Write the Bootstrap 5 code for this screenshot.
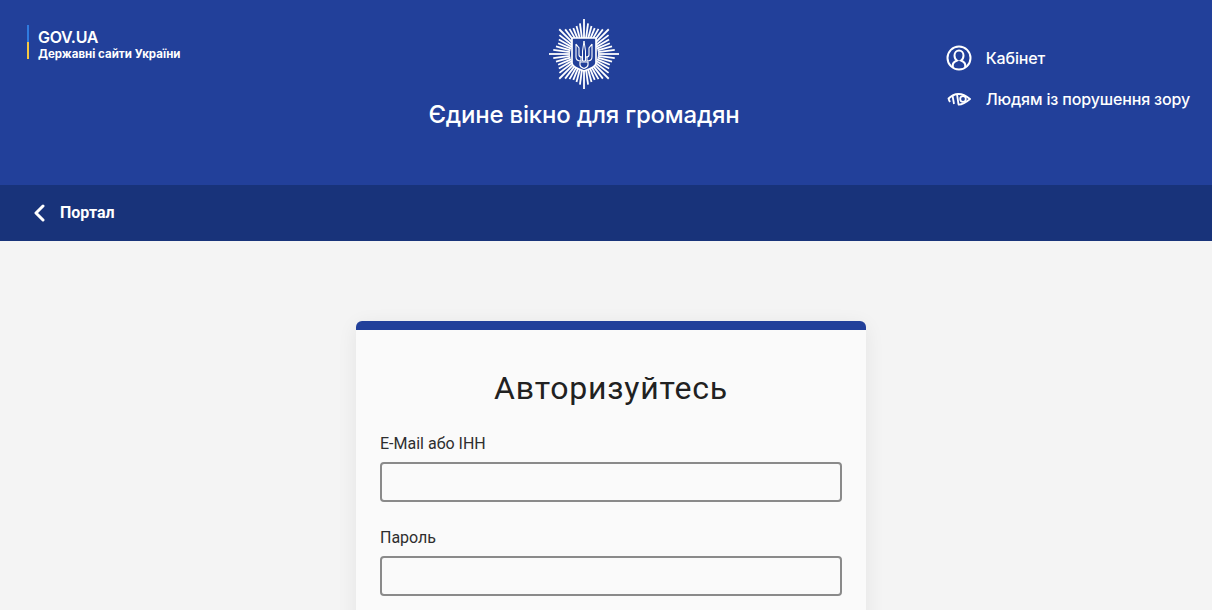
<!DOCTYPE html>
<html lang="uk">
<head>
<meta charset="UTF-8">
<title>Єдине вікно для громадян</title>
<link href="https://cdn.jsdelivr.net/npm/bootstrap@5.3.3/dist/css/bootstrap.min.css" rel="stylesheet">
<style>
body { background: #f4f4f4; font-family: Roboto, sans-serif; color: #212121; height: 610px; overflow: hidden; }
.top-head { background: #22409a; height: 185px; color: #fff; padding: 18px 22px 0 27px; font-family: Inter, sans-serif; }
.gov-box { width: 297px; gap: 9px; }
.gov-line { width: 2px; height: 34px; margin-top: 7px; background: linear-gradient(#2f7be0 50%, #f5c842 50%); }
.gov-name { font-size: 16px; font-weight: 600; line-height: 20px; letter-spacing: -.3px; }
.gov-sub { font-size: 11.5px; font-weight: 700; line-height: 14px; }
.head-mid { width: 520px; }
.head-title { font-size: 24px; font-weight: 500; margin-top: 10px; line-height: 30px; letter-spacing: -.2px; }
.head-links { margin-left: auto; font-size: 16px; font-weight: 500; padding-top: 27px; letter-spacing: -.15px; }
.head-link { height: 26px; margin-bottom: 15px; gap: 14px; white-space: nowrap; }
.icon-wrap { width: 26px; display: flex; justify-content: center; }
.sub-bar { background: #18337a; height: 56px; color: #fff; padding-left: 33px; font-size: 16px; font-weight: 700; gap: 15px; }
.login-card { width: 510px; margin: 80px 0 0 356px; background: #fafafa; border-top: 9px solid #22409a; border-radius: 6px 6px 0 0; padding: 0 24px; box-shadow: 0 4px 20px rgba(0,0,0,.07); height: 400px; }
.login-title { font-size: 32px; font-weight: 400; letter-spacing: .8px; text-align: center; margin: 0; padding-top: 38px; line-height: 40px; margin-bottom: 26px; }
.field-label { font-size: 16px; line-height: 20px; margin-bottom: 8px; display: block; color: #2e2e2e; }
.field-input { height: 40px; border: 2px solid #8a8a8a; border-radius: 4px; background: transparent; margin-bottom: 26px; }
</style>
</head>
<body>
<header class="top-head d-flex align-items-start">
  <div class="gov-box d-flex">
    <div class="gov-line"></div>
    <div style="padding-top:9px">
      <div class="gov-name">GOV.UA</div>
      <div class="gov-sub">Державні сайти України</div>
    </div>
  </div>
  <div class="head-mid text-center">
    <svg width="72" height="72" viewBox="-36 -36 72 72" fill="none" stroke="#fff">
      <g id="rays" stroke-width="1.8"></g>
      <path d="M-12 -16H12V9Q12 13 0 17Q-12 13 -12 9Z" fill="#22409a" stroke-width="1.7"/>
      <path d="M0 -13L-1.500 -3V7H1.500V-3Z" stroke-width="1"/>
      <path d="M-8 -10V3Q-8 7 -3 7V3M-8 -10L-5 -6V1Q-5 3 -2 3M8 -10V3Q8 7 3 7V3M8 -10L5 -6V1Q5 3 2 3" stroke-width="1.100"/>
      <path d="M-4 8H4V11Q4 13 0 14.500Q-4 13 -4 11Z" stroke-width="1.200"/>
    </svg>
    <div class="head-title">Єдине вікно для громадян</div>
  </div>
  <div class="head-links">
    <div class="head-link d-flex align-items-center">
      <span class="icon-wrap"><svg width="26" height="26" viewBox="0 0 26 26" fill="none" stroke="#fff" stroke-width="2"><circle cx="13" cy="13" r="11.500"/><path d="M7 22c-1-3 0-5 4-6.500-1.500-1-2.500-3-2.500-5 0-3 2-5 4.500-5s4.500 2 4.500 5c0 2-1 4-2.500 5 4 1.500 5 3.500 4 6.500"/></svg></span>
      <span>Кабінет</span>
    </div>
    <div class="head-link d-flex align-items-center">
      <span class="icon-wrap"><svg width="24" height="14" viewBox="0 0 24 14" fill="none" stroke="#fff" stroke-width="1.800"><path d="M1 7Q11 -3 23 7Q16 13 11 12.500"/><circle cx="16" cy="7" r="2.800"/><path d="M1.500 7L3 10M5.500 3.500L7 12M10 2L11.500 12.500"/></svg></span>
      <span>Людям із порушення зору</span>
    </div>
  </div>
</header>
<nav class="sub-bar d-flex align-items-center">
  <svg width="12" height="18" viewBox="0 0 12 18" fill="none" stroke="#fff" stroke-width="3" stroke-linecap="round" stroke-linejoin="round"><path d="M10 2L3 9l7 7"/></svg>
  <span>Портал</span>
</nav>
<main class="login-card">
  <h1 class="login-title">Авторизуйтесь</h1>
  <label class="field-label">E-Mail або ІНН</label>
  <div class="field-input"></div>
  <label class="field-label">Пароль</label>
  <div class="field-input"></div>
</main>
<script>
var g = document.getElementById("rays"), s = "", len = [35, 31, 29, 28, 29, 31];
for (var i = 0; i < 48; i++) {
  var a = i * Math.PI / 24, r = len[i % 6];
  s += '<line x1="' + 14 * Math.cos(a) + '" y1="' + 14 * Math.sin(a) + '" x2="' + r * Math.cos(a) + '" y2="' + r * Math.sin(a) + '"/>';
}
g.innerHTML = s;
</script>
<script src="https://cdn.jsdelivr.net/npm/bootstrap@5.3.3/dist/js/bootstrap.bundle.min.js"></script>
</body>
</html>
